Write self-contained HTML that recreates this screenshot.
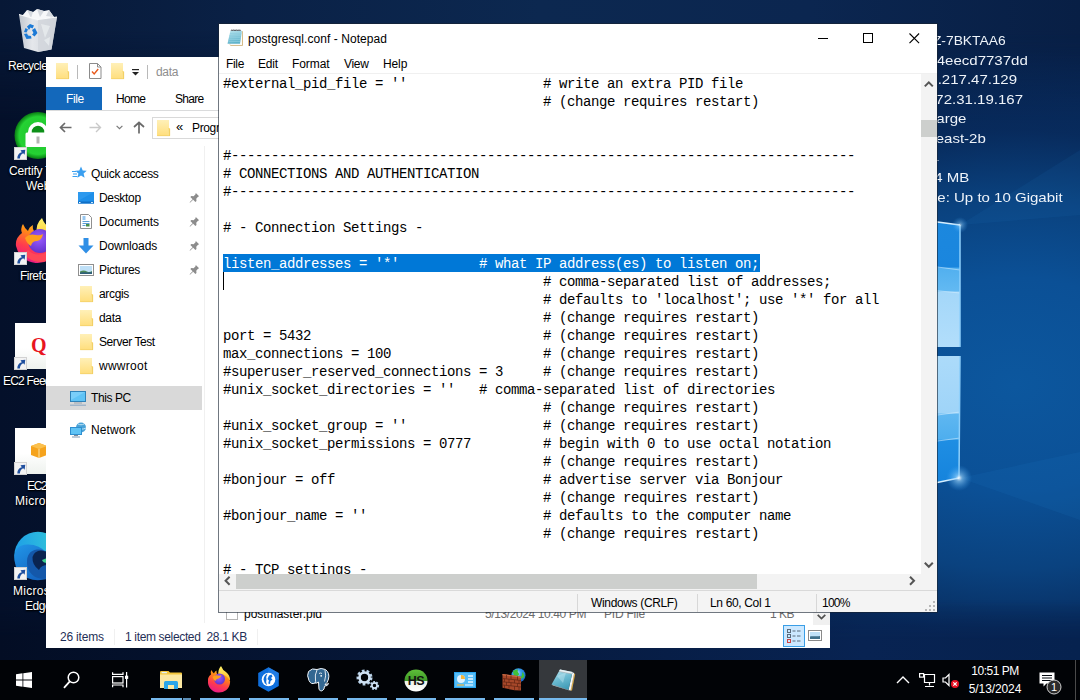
<!DOCTYPE html>
<html><head><meta charset="utf-8"><title>desktop</title>
<style>
*{box-sizing:border-box;margin:0;padding:0}
html,body{width:1080px;height:700px;overflow:hidden}
body{position:relative;font-family:"Liberation Sans",sans-serif;font-size:12px;color:#000;background:#05142e}
.a{position:absolute}
svg{position:absolute;overflow:visible}
#wall{position:absolute;left:0;top:0;width:1080px;height:700px;overflow:hidden;
 background:linear-gradient(90deg,#04102a 0%,#051634 25%,#061d44 55%,#07234f 100%)}
#desk{position:absolute;left:0;top:0;width:1080px;height:660px;overflow:hidden}
.dl{position:absolute;color:#fff;font-size:12px;line-height:14px;white-space:nowrap;text-shadow:0 1px 2px rgba(0,0,0,.95),0 0 2px rgba(0,0,0,.7),1px 1px 1px rgba(0,0,0,.6)}
.bg{position:absolute;left:937px;width:143px;height:20px;overflow:hidden}
.bg span{position:absolute;right:0;top:0;color:#eef3f9;font-size:13.3px;white-space:nowrap;transform-origin:100% 50%;transform:scaleX(1.13)}
/* Explorer */
#exp{position:absolute;left:46px;top:57px;width:784px;height:591px;background:#fff;overflow:hidden}
#exp .t{position:absolute;white-space:nowrap;font-size:12px;color:#000;line-height:14px}
/* Notepad */
#np{position:absolute;left:218px;top:23px;width:720px;height:590px;background:#fff;background-clip:padding-box;border:1px solid rgba(25,35,50,.62);overflow:hidden}
#np .t{position:absolute;white-space:nowrap;font-size:12px;color:#000;line-height:14px}
#txt{position:absolute;left:0;top:50px;width:702px;height:500px;overflow:hidden;background:#fff}
.ln{position:absolute;left:4px;white-space:pre;font-family:"Liberation Mono",monospace;font-size:14px;letter-spacing:-0.4px;height:18px;line-height:18px;color:#000}
.ln.sel{color:#fff}
/* Taskbar */
#tb{position:absolute;left:0;top:660px;width:1080px;height:40px;background:#010306;overflow:hidden}

</style></head>
<body>
<div id="wall"><div class="a" id="topstrip" style="left:0;top:0;width:1080px;height:120px;background:linear-gradient(90deg,#071836 0%,#0a2146 23%,#0c2850 50%,#0b2650 75%,#081f45 100%);-webkit-mask-image:linear-gradient(180deg,#000 25%,transparent 100%);mask-image:linear-gradient(180deg,#000 25%,transparent 100%)"></div>
<div class="a" style="left:0;top:0;width:1080px;height:700px;background:radial-gradient(ellipse 470px 335px at 1015px 385px,#0c579e 0%,#0b5096 32%,#0a427f 55%,rgba(8,47,100,.65) 76%,rgba(7,35,79,0) 100%)"></div>
<svg style="left:930px;top:140px" width="150" height="400" viewBox="930 140 150 400">
<defs><linearGradient id="wg1" x1="0" y1="0" x2="0" y2="1"><stop offset="0" stop-color="#1c88de"/><stop offset=".365" stop-color="#1a86de"/><stop offset=".375" stop-color="#52b0ef"/><stop offset=".555" stop-color="#62b9f2"/><stop offset=".565" stop-color="#a4d7f9"/><stop offset="1" stop-color="#b2defb"/></linearGradient>
<linearGradient id="wg2" x1="0" y1="0" x2="0" y2="1"><stop offset="0" stop-color="#acdbfa"/><stop offset=".445" stop-color="#9fd4f8"/><stop offset=".455" stop-color="#5fb7f1"/><stop offset=".65" stop-color="#4eaeee"/><stop offset=".66" stop-color="#1f8ee3"/><stop offset="1" stop-color="#1583dc"/></linearGradient></defs>
<path d="M930 221L960 225L960 347L930 347z" fill="url(#wg1)"/>
<path d="M930 356L960 356L959 478L930 484z" fill="url(#wg2)"/>
<path d="M930 221L960 225" stroke="#d6efff" stroke-width="1.5"/><path d="M930 266L960 270M930 290L960 293M930 416L960 412M930 442L960 438" stroke="#d6efff" stroke-width="1" opacity=".55"/>
<path d="M960 225V347M960 356L959 478" stroke="#8fd0fb" stroke-width="1.5"/>
<path d="M930 484L959 478" stroke="#d6efff" stroke-width="1.5"/>
<defs><radialGradient id="glw"><stop offset="0" stop-color="#ffffff" stop-opacity=".95"/><stop offset=".25" stop-color="#9fd8ff" stop-opacity=".6"/><stop offset="1" stop-color="#3a9ff0" stop-opacity="0"/></radialGradient></defs><path d="M960 478L1080 452V520z" fill="#2a86d8" opacity=".10"/><path d="M960 225L1080 150V215z" fill="#2a86d8" opacity=".08"/><circle cx="959" cy="478" r="13" fill="url(#glw)"/><circle cx="960" cy="225" r="8" fill="url(#glw)" opacity=".7"/>
</svg>

<div class="a" style="left:0;top:600px;width:1080px;height:60px;background:linear-gradient(90deg,#030d24 0%,#06183a 40%,#082352 80%,#06224f 100%);-webkit-mask-image:linear-gradient(0deg,#000 30%,transparent 100%);mask-image:linear-gradient(0deg,#000 30%,transparent 100%)"></div></div>
<div id="desk"><svg width="0" height="0" style="position:absolute"><defs>
<g id="sc"><rect x="0.5" y="0.5" width="12" height="12" fill="#f3f3f3" stroke="#d2d2d2"/><path d="M3.3 11.500Q3.3 6.5 7.8 5.300L6.5 3.300L11.3 2.800L10.6 7.700L9.3 6.300Q6 7.6 5.9 11.500z" fill="#1f4f9e"/></g>
</defs></svg>
<!-- recycle bin -->
<svg style="left:17px;top:7px" width="42" height="46" viewBox="17 7 42 46">
<defs><linearGradient id="rb" x1="0" y1="0" x2="1" y2="0"><stop offset="0" stop-color="#c9ced5"/><stop offset=".35" stop-color="#eef0f3"/><stop offset=".7" stop-color="#dfe3e8"/><stop offset="1" stop-color="#c3c8cf"/></linearGradient></defs>
<path d="M22 16L27 10L33 12L37 9L44 11L49 10L54 17L38 21z" fill="#f7f8fa"/>
<path d="M27 10L33 12L31 18zM37 9L44 11L40 17zM49 10L54 17L46 16z" fill="#d5d9df"/>
<path d="M19 14.500L38 19.500L57 17L51.5 49.500L38 52L24 48z" fill="url(#rb)" opacity=".96"/>
<path d="M38 19.500L57 17L51.5 49.500L38 52z" fill="#d2d6dc" opacity=".85"/>
<path d="M19 14.500L38 19.500L57 17" fill="none" stroke="#fbfcfd" stroke-width="1"/>
<path d="M41 24l4 14 5-12zM44 40l6-3-1 9z" fill="#e9ecef" opacity=".8"/>
<g fill="#1c7ad6"><path d="M27 26.500l3-2.5 4 1.5-1.5 3-2-1-1.5 2.500z"/><path d="M35 28l2.5 5-3 3.5-2.5-2 1.5-1.5-1.5-3z"/><path d="M31.5 38.500l-5 .5-2.5-5 3-.5 1 2 3 .5z"/><path d="M24 32l1.5-4 2.5 1.5-1.5 3z"/></g>
</svg>
<div class="dl" style="left:8px;top:59px;letter-spacing:-0.460px;">Recycle Bin</div>
<!-- certify -->
<svg style="left:14px;top:112px" width="48" height="48" viewBox="0 0 48 48"><defs><radialGradient id="cg" cx=".5" cy=".5" r=".5"><stop offset="0" stop-color="#1fc02c"/><stop offset=".8" stop-color="#25d233"/><stop offset=".9" stop-color="#16a622"/><stop offset="1" stop-color="#0a7a14"/></radialGradient></defs>
<circle cx="24" cy="23.5" r="23.5" fill="url(#cg)"/>
<path d="M17.7 22v-2a6.3 6.3 0 0 1 12.6 0v2z" fill="#0d8f18"/>
<path d="M15.85 22v-2a8.15 8.15 0 0 1 16.3 0v2" fill="none" stroke="#fff" stroke-width="3.7"/>
<rect x="11.5" y="20.6" width="25" height="14.5" rx="1.5" fill="#fff"/><rect x="22.5" y="24.5" width="3" height="7" fill="#b5b5b5"/></svg>
<svg style="left:14px;top:147px" width="13" height="13"><use href="#sc"/></svg>
<div class="dl" style="left:9px;top:164px;letter-spacing:-0.179px;">Certify The</div>
<div class="dl" style="left:26px;top:179px;letter-spacing:0.014px;">Web</div>
<!-- firefox -->
<svg style="left:14px;top:216px" width="50" height="48" viewBox="14 216 50 48"><defs><linearGradient id="fg" x1=".7" y1="0" x2=".3" y2="1"><stop offset="0" stop-color="#ffbd2f"/><stop offset=".3" stop-color="#ff8a16"/><stop offset=".65" stop-color="#ff3b4e"/><stop offset="1" stop-color="#e8188a"/></linearGradient><radialGradient id="fp" cx=".45" cy=".4" r=".7"><stop offset="0" stop-color="#9a5cff"/><stop offset="1" stop-color="#5a2bc4"/></radialGradient><linearGradient id="fy" x1="0" y1="0" x2="0" y2="1"><stop offset="0" stop-color="#fff36a"/><stop offset="1" stop-color="#ffbd2f"/></linearGradient></defs>
<path d="M37 234Q35 224 42 218Q44 224 50 228Q58 234 58 244L44 244z" fill="url(#fy)"/>
<path d="M22 233Q20 228 23 224Q25 229 28 231Q29 227 33 225Q32 230 36 233Q44 230 52 236Q60 244 58 250A22 21 0 0 1 16 246Q15 238 22 233z" fill="url(#fg)"/>
<circle cx="40" cy="241" r="12" fill="url(#fp)"/>
<path d="M25 238Q29 233 36 235Q40 236 43 234Q42 240 37 241Q32 241 31 246Q27 244 25 238z" fill="#ff9f1c"/>
<path d="M28 250Q36 258 48 252Q56 248 56 240Q60 250 52 258Q40 266 28 258Q22 254 28 250z" fill="#ff4a55" opacity=".9"/></svg>
<svg style="left:14px;top:252px" width="13" height="13"><use href="#sc"/></svg>
<div class="dl" style="left:20px;top:269px;letter-spacing:-0.554px;">Firefox</div>
<!-- EC2 feedback -->
<div class="a" style="left:15px;top:323px;width:46px;height:46px;background:linear-gradient(#fff 55%,#eef2ee)"></div>
<div class="a" style="left:31px;top:333px;font-family:'Liberation Serif',serif;font-weight:bold;font-size:20px;line-height:24px;color:#e8151f">Q</div>
<svg style="left:14px;top:357px" width="13" height="13"><use href="#sc"/></svg>
<div class="dl" style="left:3px;top:374px;letter-spacing:-0.790px;">EC2 Feedback</div>
<!-- EC2 microsoft -->
<div class="a" style="left:15px;top:428px;width:46px;height:46px;background:linear-gradient(#fff 55%,#eef2ee)"></div>
<svg style="left:31px;top:443px" width="16" height="15"><path d="M8 0l8 3v9l-8 3-8-3V3z" fill="#f5a31d"/><path d="M8 0l8 3-8 3-8-3z" fill="#fbc04d"/><path d="M8 6v9" stroke="#fde3a8" stroke-width="1"/></svg>
<svg style="left:14px;top:462px" width="13" height="13"><use href="#sc"/></svg>
<div class="dl" style="left:27px;top:479px;letter-spacing:-1.315px;">EC2</div>
<div class="dl" style="left:15px;top:494px;letter-spacing:0.269px;">Microsoft</div>
<!-- edge -->
<svg style="left:14px;top:531px" width="50" height="50" viewBox="14 531 50 50"><defs><linearGradient id="eg" x1="0" y1=".2" x2="1" y2=".1"><stop offset="0" stop-color="#1e9fe6"/><stop offset=".6" stop-color="#2cb9de"/><stop offset="1" stop-color="#3fd0c0"/></linearGradient><linearGradient id="eg2" x1="0" y1="0" x2=".6" y2="1"><stop offset="0" stop-color="#2196e8"/><stop offset="1" stop-color="#1466c2"/></linearGradient></defs>
<circle cx="38" cy="555.5" r="23.7" fill="url(#eg)"/>
<path d="M14.4 557Q15 545 27 544.500Q39 544 47 553L47 579Q30 583 20 573Q14 566 14.4 557z" fill="url(#eg2)"/>
<path d="M27 563Q26.5 551 37 549.500Q44 549 48 553L48 578.500Q38 580 32 574.500Q27 570 27 563z" fill="#1458aa"/>
<path d="M32.5 557Q34.5 550.5 41 550.500L48 552L48 565Q41 565 39 570Q32 565 32.5 557z" fill="#0a2450"/>
<path d="M42 560Q43 563 47 563L47 558z" fill="#3ccf8e"/></svg>
<svg style="left:14px;top:567px" width="13" height="13"><use href="#sc"/></svg>
<div class="dl" style="left:13px;top:584px;letter-spacing:0.269px;">Microsoft</div>
<div class="dl" style="left:25px;top:599px;letter-spacing:-0.432px;">Edge</div>
<!-- bginfo -->
<div class="bg" style="top:33px"><span style="right:74px;transform:scaleX(1.04)">EC2AMAZ-7BKTAA6</span></div>
<div class="bg" style="top:53px"><span style="right:52px">i-0a4eecd7737dd</span></div>
<div class="bg" style="top:72px"><span style="right:63px">18.217.47.129</span></div>
<div class="bg" style="top:92px"><span style="right:57px">172.31.19.167</span></div>
<div class="bg" style="top:111px"><span style="right:114px">t3.large</span></div>
<div class="bg" style="top:131px"><span style="right:94px">us-east-2b</span></div>
<div class="bg" style="top:151px"><span style="right:141px">64</span></div>
<div class="bg" style="top:170px"><span style="right:111px">8104 MB</span></div>
<div class="bg" style="top:190px"><span style="right:17px">Performance: Up to 10 Gigabit</span></div>
</div>
<div id="exp"><svg width="0" height="0" style="position:absolute"><defs>
<linearGradient id="fgd" x1="0" y1="0" x2="0" y2="1"><stop offset="0" stop-color="#fff0b8"/><stop offset="1" stop-color="#ffde7c"/></linearGradient><g id="fold"><path d="M0 0h12v8.500h1v7.500h-13z" fill="url(#fgd)"/><path d="M11 8.500h2v7.500h-2z" fill="#f8d468"/><path d="M11.3 9v7" stroke="#fde9a0" stroke-width=".8"/><path d="M12.7 8.700V15.700H0.3" fill="none" stroke="#efcb63" stroke-width=".6"/></g>
<g id="pin"><path d="M6.2 0.8l3 3-1 .6-1.6 1.7.2 2-1 .9-2-2L.9 9.8.6 9.4 3.3 6.6 1.2 4.500l1-.9 2 .2 1.6-1.600z" fill="#8c8c8c"/></g>
</defs></svg>
<!-- title bar -->
<svg style="left:10px;top:6px" width="13" height="16"><use href="#fold"/></svg>
<div class="a" style="left:31px;top:8px;width:1px;height:14px;background:#b9b9b9"></div>
<svg style="left:43px;top:6px" width="13" height="16"><path d="M0.5.5h8l3.5 3.500v11.500h-11.500z" fill="#fff" stroke="#8b8b8b"/><path d="M8.5.5v3.500h3.5" fill="none" stroke="#8b8b8b"/><path d="M3 8.500l2.2 2.5 4-5" fill="none" stroke="#e8591c" stroke-width="1.4"/></svg>
<svg style="left:65px;top:6px" width="13" height="16"><use href="#fold"/></svg>
<svg style="left:86px;top:12px" width="8" height="7"><rect x="0" y="0" width="7" height="1.2" fill="#222"/><path d="M0 3h7l-3.5 3.500z" fill="#222"/></svg>
<div class="a" style="left:101px;top:8px;width:1px;height:14px;background:#b9b9b9"></div>
<div class="t" style="left:110px;top:8px;color:#8e8e8e;letter-spacing:-0.339px;">data</div>
<!-- ribbon tabs -->
<div class="a" style="left:0;top:30px;width:56px;height:23px;background:#1368bb"></div>
<div class="t" style="left:20px;top:35px;color:#fff;letter-spacing:-0.409px;">File</div>
<div class="t" style="left:70px;top:35px;letter-spacing:-0.703px;">Home</div>
<div class="t" style="left:129px;top:35px;letter-spacing:-0.725px;">Share</div>
<div class="a" style="left:0;top:53px;width:784px;height:1px;background:#dadbdc"></div>
<!-- nav row -->
<svg style="left:13px;top:65px" width="13" height="11"><path d="M12.5 5.500h-11M6 1L1.5 5.500L6 10" fill="none" stroke="#6a6a6a" stroke-width="1.7"/></svg>
<svg style="left:43px;top:65px" width="13" height="11"><path d="M0.5 5.500h11M7 1l4.5 4.500L7 10" fill="none" stroke="#c9c9c9" stroke-width="1.4"/></svg>
<svg style="left:70px;top:68px" width="7" height="5"><path d="M0.6.8L3.5 3.7 6.4.8" fill="none" stroke="#7a7a7a" stroke-width="1.2"/></svg>
<svg style="left:87px;top:64px" width="12" height="13"><path d="M6 12.500v-11M1 6L6 1.5 11 6" fill="none" stroke="#6a6a6a" stroke-width="1.7"/></svg>
<div class="a" style="left:106px;top:60px;width:500px;height:22px;border:1px solid #d9d9d9;background:#fff"></div>
<svg style="left:111px;top:63px" width="13" height="16"><use href="#fold"/></svg>
<div class="t" style="left:130px;top:63px;font-size:13px;">«</div>
<div class="t" style="left:146px;top:64px;letter-spacing:-0.361px;">Program Files</div>
<!-- nav pane -->
<div class="a" style="left:158px;top:89px;width:1px;height:477px;background:#f0f0f0"></div>
<svg style="left:26px;top:109px" width="15" height="14"><path d="M9 0.500l1.7 4 4 .3-3.1 2.7 1 4.200L9 9.500l-3.6 2.2 1-4.200L3.3 4.800l4-.3z" fill="#3a9ff0"/><path d="M0 5.500h4M1 8h4M0.5 10.500h5" stroke="#3a9ff0" stroke-width="1.2"/></svg>
<div class="t" style="left:45px;top:110px;letter-spacing:-0.321px;">Quick access</div>
<svg style="left:32px;top:135px" width="16" height="12"><rect x="0" y="0" width="16" height="11.5" fill="#1e8fe9"/><path d="M0 0h16L0 9z" fill="#39a3f3" opacity=".5"/><rect x="0" y="9.5" width="16" height="2" fill="#0f6fc6"/><rect x="1" y="10" width="1.5" height="1" fill="#fff"/><rect x="13" y="10" width="2" height="1" fill="#cfe6fb"/></svg>
<div class="t" style="left:53px;top:134px;letter-spacing:-0.325px;">Desktop</div>
<svg style="left:143px;top:135px" width="11" height="11" viewBox="0 0 10 10"><use href="#pin"/></svg>
<svg style="left:34px;top:157px" width="12" height="15"><path d="M0.5.5h8l3 3v11h-11z" fill="#fff" stroke="#909090"/><path d="M2.5 3h3M2.5 5h3" stroke="#2d8de0" stroke-width="1"/><path d="M2.5 7.500h7M2.5 9.500h7M2.5 11.500h3" stroke="#5c9fd6" stroke-width="1"/><rect x="6" y="10" width="3.5" height="2.5" fill="#4a8f4a"/></svg>
<div class="t" style="left:53px;top:158px;letter-spacing:-0.077px;">Documents</div>
<svg style="left:143px;top:159px" width="11" height="11" viewBox="0 0 10 10"><use href="#pin"/></svg>
<svg style="left:32px;top:181px" width="16" height="16"><path d="M5.5 0h5v7.500h5L8 15.5 0.5 7.500h5z" fill="#2f8fe6"/></svg>
<div class="t" style="left:53px;top:182px;letter-spacing:-0.152px;">Downloads</div>
<svg style="left:143px;top:183px" width="11" height="11" viewBox="0 0 10 10"><use href="#pin"/></svg>
<svg style="left:32px;top:207px" width="16" height="12"><rect x="0.5" y="0.5" width="15" height="11" fill="#fff" stroke="#8f8f8f"/><rect x="2" y="2" width="12" height="8" fill="#bfe0f7"/><path d="M2 10V7.500c3-1.5 5-1 7 0s3.5.5 5-.5V10z" fill="#4d8a57"/><path d="M2 10V8.700c4-.8 8 .2 12-.7V10z" fill="#2f5f7a"/></svg>
<div class="t" style="left:53px;top:206px;letter-spacing:-0.294px;">Pictures</div>
<svg style="left:143px;top:207px" width="11" height="11" viewBox="0 0 10 10"><use href="#pin"/></svg>
<svg style="left:34px;top:229px" width="13" height="16"><use href="#fold"/></svg>
<div class="t" style="left:53px;top:230px;letter-spacing:-0.335px;">arcgis</div>
<svg style="left:34px;top:253px" width="13" height="16"><use href="#fold"/></svg>
<div class="t" style="left:53px;top:254px;letter-spacing:-0.339px;">data</div>
<svg style="left:34px;top:277px" width="13" height="16"><use href="#fold"/></svg>
<div class="t" style="left:53px;top:278px;letter-spacing:-0.429px;">Server Test</div>
<svg style="left:34px;top:301px" width="13" height="16"><use href="#fold"/></svg>
<div class="t" style="left:53px;top:302px;letter-spacing:0.260px;">wwwroot</div>
<div class="a" style="left:0;top:329px;width:156px;height:24px;background:#d9d9d9"></div>
<svg style="left:24px;top:334px" width="16" height="15"><rect x="0.5" y="0.5" width="15" height="10" fill="#5fc3f5" stroke="#2f82b8"/><path d="M1 1h14L1 9z" fill="#8bd6fb" opacity=".6"/><rect x="4" y="11.6" width="8" height=".8" fill="#8d9aa5"/><rect x="0" y="13.7" width="16" height=".9" fill="#7f9fc0"/></svg>
<div class="t" style="left:45px;top:334px;letter-spacing:-0.418px;">This PC</div>
<svg style="left:24px;top:365px" width="17" height="16"><circle cx="11" cy="5.5" r="5" fill="#4aa3d8"/><path d="M8 2c2 1 4 1 6 0M7 6c3 1.5 6 1.5 9 0" stroke="#bfe3f5" stroke-width="1" fill="none"/><rect x="0.5" y="5.5" width="11" height="7" fill="#5fc3f5" stroke="#2f8fd0"/><rect x="4" y="13" width="4" height="1" fill="#7f8c97"/><rect x="2" y="14.5" width="8" height="1" fill="#7f98b4"/></svg>
<div class="t" style="left:45px;top:366px;letter-spacing:0.084px;">Network</div>
<!-- file row under notepad -->
<div class="a" style="left:180px;top:551px;width:12px;height:12px;border:1px solid #b5b5b5;background:#fff"></div>
<div class="t" style="left:198px;top:550px;letter-spacing:-0.003px;">postmaster.pid</div>
<div class="t" style="left:439px;top:550px;color:#6d6d6d;letter-spacing:-0.394px;">5/13/2024 10:40 PM</div>
<div class="t" style="left:558px;top:550px;color:#6d6d6d;letter-spacing:-0.209px;">PID File</div>
<div class="t" style="left:724px;top:550px;color:#6d6d6d;letter-spacing:-0.504px;">1 KB</div>
<!-- right scrollbar -->
<div class="a" style="left:767px;top:106px;width:17px;height:462px;background:#f0f0f0"></div>
<svg style="left:771px;top:557px" width="9" height="6"><path d="M0.7.8L4.5 4.6 8.3.8" stroke="#505050" stroke-width="1.7" fill="none"/></svg>
<!-- status bar -->
<div class="t" style="left:14px;top:573px;color:#1f2f57;letter-spacing:-0.194px;">26 items</div>
<div class="a" style="left:68px;top:572px;width:1px;height:16px;background:#f0f0f0"></div>
<div class="t" style="left:79px;top:573px;color:#1f2f57;letter-spacing:-0.345px;">1 item selected&nbsp;&nbsp;28.1 KB</div>
<div class="a" style="left:211px;top:572px;width:1px;height:16px;background:#f0f0f0"></div>
<div class="a" style="left:737px;top:568px;width:22px;height:22px;background:#cce8ff;border:1px solid #3a9ee6"></div>
<svg style="left:741px;top:572px" width="14" height="14"><g fill="none" stroke="#5a6a7a"><rect x="0.5" y="0.5" width="3" height="3"/><rect x="0.5" y="5.5" width="3" height="3"/><rect x="0.5" y="10.5" width="3" height="3" stroke="#d04040"/></g><path d="M5.5 2h3M10 2h3.500M5.5 7h3M10 7h3.500M5.5 12h3M10 12h3.5" stroke="#5a6a7a"/></svg>
<svg style="left:762px;top:573px" width="14" height="11"><rect x="0.5" y="0.5" width="13" height="10" fill="#fff" stroke="#8a8a8a"/><rect x="2" y="2" width="10" height="7" fill="#bfe0f7"/><path d="M2 9V6.500c3-1 6 .5 10-.5V9z" fill="#3f6f8a"/></svg>
</div>
<div id="np"><!-- title bar -->
<svg style="left:7px;top:5px" width="20" height="20" viewBox="226 29 20 20"><defs><linearGradient id="npg" x1="0" y1="0" x2=".3" y2="1"><stop offset="0" stop-color="#b9e4ee"/><stop offset="1" stop-color="#5fb3cb"/></linearGradient></defs>
<path d="M242 31L243 31.500L242.8 45.700L230.5 45.700L229.5 44z" fill="#c9aa6c"/>
<path d="M241.5 31L242.3 31.300L242 45L230.5 45L229.8 44z" fill="#fbfbf8"/>
<path d="M230.4 30.800L242 30.800L240 43.800L227.5 43.800z" fill="url(#npg)"/>
<path d="M230 33.500h11.300M229.6 35.500h11.400M229.2 37.500h11.500M228.8 39.500h11.600M228.4 41.500h11.7" stroke="#8fcfe0" stroke-width=".7"/>
<path d="M231 31l.8-1.3.8 1.3.8-1.3.8 1.3.8-1.3.8 1.3.8-1.3.8 1.3.8-1.3.8 1.3.8-1.3.8 1.3" fill="none" stroke="#4a4f55" stroke-width=".8"/>
</svg>
<div class="t" style="left:29px;top:8px;letter-spacing:0.063px;">postgresql.conf - Notepad</div>
<svg style="left:599px;top:14px" width="11" height="1"><rect width="10" height="1" fill="#000"/></svg>
<svg style="left:644px;top:9px" width="11" height="11"><rect x="0.5" y="0.5" width="9" height="9" fill="none" stroke="#000"/></svg>
<svg style="left:690px;top:9px" width="11" height="11"><path d="M0.5 0.5l9.6 9.6M10.1 0.5l-9.6 9.6" stroke="#000" stroke-width="1.1" fill="none"/></svg>
<!-- menu -->
<div class="t" style="left:7px;top:33px;letter-spacing:-0.334px;">File</div>
<div class="t" style="left:39px;top:33px;letter-spacing:-0.232px;">Edit</div>
<div class="t" style="left:73px;top:33px;letter-spacing:-0.084px;">Format</div>
<div class="t" style="left:125px;top:33px;letter-spacing:-0.324px;">View</div>
<div class="t" style="left:164px;top:33px;letter-spacing:-0.108px;">Help</div>
<div class="a" style="left:0;top:49px;width:718px;height:1px;background:#f0f0f0"></div>
<div id="txt">
<div class="ln" style="top:1px">#external_pid_file = ''                 # write an extra PID file</div>
<div class="ln" style="top:19px">                                        # (change requires restart)</div>
<div class="ln" style="top:73px">#------------------------------------------------------------------------------</div>
<div class="ln" style="top:91px"># CONNECTIONS AND AUTHENTICATION</div>
<div class="ln" style="top:109px">#------------------------------------------------------------------------------</div>
<div class="ln" style="top:145px"># - Connection Settings -</div>
<div class="a" style="left:4px;top:180px;width:537px;height:18px;background:#0078d7"></div>
<div class="ln sel" style="top:181px">listen_addresses = '*'          # what IP address(es) to listen on;</div>
<div class="ln" style="top:199px">                                        # comma-separated list of addresses;</div>
<div class="ln" style="top:217px">                                        # defaults to 'localhost'; use '*' for all</div>
<div class="ln" style="top:235px">                                        # (change requires restart)</div>
<div class="ln" style="top:253px">port = 5432                             # (change requires restart)</div>
<div class="ln" style="top:271px">max_connections = 100                   # (change requires restart)</div>
<div class="ln" style="top:289px">#superuser_reserved_connections = 3     # (change requires restart)</div>
<div class="ln" style="top:307px">#unix_socket_directories = ''   # comma-separated list of directories</div>
<div class="ln" style="top:325px">                                        # (change requires restart)</div>
<div class="ln" style="top:343px">#unix_socket_group = ''                 # (change requires restart)</div>
<div class="ln" style="top:361px">#unix_socket_permissions = 0777         # begin with 0 to use octal notation</div>
<div class="ln" style="top:379px">                                        # (change requires restart)</div>
<div class="ln" style="top:397px">#bonjour = off                          # advertise server via Bonjour</div>
<div class="ln" style="top:415px">                                        # (change requires restart)</div>
<div class="ln" style="top:433px">#bonjour_name = ''                      # defaults to the computer name</div>
<div class="ln" style="top:451px">                                        # (change requires restart)</div>
<div class="ln" style="top:487px"># - TCP settings -</div>
<div class="a" style="left:4px;top:198px;width:1px;height:18px;background:#000"></div>
</div>
<!-- vscroll -->
<div class="a" style="left:702px;top:50px;width:16px;height:500px;background:#f3f3f3"></div>
<div class="a" style="left:702px;top:96px;width:16px;height:17px;background:#cdcfcd"></div>
<svg style="left:705px;top:57px" width="10" height="7"><path d="M0.8 5.4L4.8 1.4L8.8 5.4" stroke="#555" stroke-width="2" fill="none"/></svg>
<svg style="left:705px;top:538px" width="10" height="7"><path d="M0.8 0.8L4.8 4.8L8.8 0.8" stroke="#555" stroke-width="2" fill="none"/></svg>
<!-- hscroll -->
<div class="a" style="left:0;top:550px;width:718px;height:16px;background:#f3f3f3"></div>
<div class="a" style="left:17px;top:550px;width:521px;height:15px;background:#cdcfcd"></div>
<svg style="left:5px;top:552px" width="7" height="10"><path d="M5.6 0.8L1.6 4.8L5.6 8.8" stroke="#555" stroke-width="2" fill="none"/></svg>
<svg style="left:690px;top:552px" width="7" height="10"><path d="M1 0.8L5 4.8L1 8.8" stroke="#555" stroke-width="2" fill="none"/></svg>
<!-- status -->
<div class="a" style="left:0;top:566px;width:718px;height:22px;background:#f4f4f4;border-top:1px solid #d9d9d9"></div>
<div class="a" style="left:358px;top:570px;width:1px;height:18px;background:#d7d7d7"></div>
<div class="a" style="left:478px;top:570px;width:1px;height:18px;background:#d7d7d7"></div>
<div class="a" style="left:597px;top:570px;width:1px;height:18px;background:#d7d7d7"></div>
<div class="t" style="left:372px;top:572px;letter-spacing:-0.346px;">Windows (CRLF)</div>
<div class="t" style="left:491px;top:572px;letter-spacing:-0.351px;">Ln 60, Col 1</div>
<div class="t" style="left:603px;top:572px;letter-spacing:-0.798px;">100%</div>
<!-- grip --><svg style="left:705px;top:576px" width="12" height="12"><g fill="#b8b8b8"><rect x="9" y="1" width="2" height="2"/><rect x="5" y="5" width="2" height="2"/><rect x="9" y="5" width="2" height="2"/><rect x="1" y="9" width="2" height="2"/><rect x="5" y="9" width="2" height="2"/><rect x="9" y="9" width="2" height="2"/></g></svg>
</div>
<div id="tb"><!-- start -->
<svg style="left:16px;top:12px" width="16" height="16" viewBox="0 0 16 16"><path d="M0 2.200L6.5 1.300V7.600H0zM7.3 1.200L16 0V7.600H7.300zM0 8.400H6.500V14.700L0 13.800zM7.3 8.400H16V16L7.3 14.800z" fill="#fff"/></svg>
<!-- search -->
<svg style="left:63px;top:11px" width="19" height="18"><circle cx="10.5" cy="6.5" r="5.3" fill="none" stroke="#fff" stroke-width="1.5"/><path d="M6.8 10.400L1 16.8" stroke="#fff" stroke-width="1.8"/></svg>
<!-- task view -->
<svg style="left:111px;top:11px" width="18" height="18"><g fill="none" stroke="#fff" stroke-width="1.2"><path d="M1.6 1.200V3.400H12V1.2"/><rect x="1.6" y="5.6" width="10.4" height="6.4"/><path d="M1.6 16.200V14H12V16.2"/><path d="M15.6 1V16.4"/></g><rect x="14" y="4.7" width="3.2" height="3.2" fill="#fff"/></svg>
<!-- indicators -->
<div class="a" style="left:151px;top:38px;width:31px;height:2px;background:#76b9ed"></div>
<div class="a" style="left:183px;top:38px;width:8px;height:2px;background:#5d8fb8"></div>
<div class="a" style="left:200px;top:38px;width:40px;height:2px;background:#76b9ed"></div>
<div class="a" style="left:249px;top:38px;width:40px;height:2px;background:#76b9ed"></div>
<div class="a" style="left:298px;top:38px;width:40px;height:2px;background:#76b9ed"></div>
<div class="a" style="left:347px;top:38px;width:40px;height:2px;background:#76b9ed"></div>
<div class="a" style="left:396px;top:38px;width:40px;height:2px;background:#76b9ed"></div>
<div class="a" style="left:445px;top:38px;width:40px;height:2px;background:#76b9ed"></div>
<div class="a" style="left:494px;top:38px;width:40px;height:2px;background:#76b9ed"></div>
<div class="a" style="left:539px;top:0;width:48px;height:40px;background:#35383c"></div>
<div class="a" style="left:539px;top:38px;width:48px;height:2px;background:#76b9ed"></div>
<!-- explorer icon -->
<svg style="left:160px;top:11px" width="22" height="18" viewBox="0 0 22 18"><path d="M0 1.200Q0 0 1.2 0h7.300l1.5 1.500h11Q22 1.5 22 2.500V17H0z" fill="#f2c53d"/><rect x="1.5" y="1" width="5.5" height="1.3" rx=".5" fill="#dff3fb"/><path d="M0 3.500h22V17H0z" fill="#fbe8a2"/><path d="M4 11.500Q4 10 5.5 10h11Q18 10 18 11.500V18H4z" fill="#2ba6e9"/><path d="M8 14h6v4H8z" fill="#fbe8a2"/></svg>
<!-- firefox -->
<svg style="left:207px;top:6px" width="25" height="24" viewBox="14 216 50 48"><path d="M37 234Q35 224 42 216Q45 224 52 228Q60 234 60 244L44 244z" fill="url(#fy)"/><path d="M22 233Q20 228 23 224Q25 229 28 231Q29 227 33 225Q32 230 36 233Q44 230 52 236Q62 244 60 250A22 21 0 0 1 16 246Q15 238 22 233z" fill="url(#fg)"/><circle cx="39" cy="242" r="11" fill="url(#fp)"/><path d="M25 238Q29 233 36 235Q40 236 43 234Q42 240 37 241Q32 241 31 246Q27 244 25 238z" fill="#ff9f1c"/></svg>
<!-- hex blue -->
<svg style="left:258px;top:7px" width="21" height="25" viewBox="0 0 21 25"><path d="M10.5 0.300L20.8 6v13L10.5 24.7 0.2 19V6z" fill="#0f6fdc"/><path d="M10.5 0.300L20.8 6v6.500L10.5 12.500z" fill="#2b86ea" opacity=".6"/><circle cx="10.5" cy="12.5" r="6.8" fill="#fff"/><path d="M9.5 6.500Q6 8 5.5 12.500Q6 16.5 9 18.300Q7.5 15 8.5 12.500Q7.8 9.5 9.5 6.500zM11 8.500l2.5-1 1 2-1.5 1.5 1.5 1.5-2 1.5-.5 3-1.8-.5.8-3-1.5-1.500z" fill="#0f6fdc"/></svg>
<!-- pgadmin elephant -->
<svg style="left:306px;top:8px" width="24" height="24" viewBox="0 0 24 24"><path d="M2.5 3.500Q6 -0.5 11 1.500Q15 -0.5 19.5 1.500Q24 5 22.5 11Q21.5 15 19 16.500Q21 16.5 22.5 15.500Q22 18 18.5 18.200L18 21Q15.5 24.5 13 21.500L12.5 14Q11 15.5 9 15Q5 17 3 12.500Q0.5 7.5 2.5 3.500z" fill="#336791" stroke="#f2f5f8" stroke-width="1"/><path d="M11 2Q8.5 7 9.5 12Q10 14 9 15M19 2Q20.5 8 18.5 13.5" fill="none" stroke="#f2f5f8" stroke-width=".9"/><path d="M13 5.500Q14.5 4.5 16 5.5" fill="none" stroke="#f2f5f8" stroke-width=".9"/><circle cx="15.2" cy="7.8" r=".9" fill="#fff"/></svg>
<!-- gears -->
<svg style="left:355px;top:8px" width="25" height="23" viewBox="0 0 25 23"><g fill="none"><circle cx="9.5" cy="9.5" r="6" stroke="#b9d3ea" stroke-width="4" stroke-dasharray="2.4 1.8"/><circle cx="9.5" cy="9.5" r="5" stroke="#cfe1f2" stroke-width="2.6"/><circle cx="19.5" cy="17.5" r="3.3" stroke="#b9d3ea" stroke-width="2.6" stroke-dasharray="1.6 1.2"/><circle cx="19.5" cy="17.5" r="2.6" stroke="#cfe1f2" stroke-width="1.6"/></g></svg>
<!-- HS -->
<svg style="left:404px;top:9px" width="24" height="23" viewBox="0 0 24 23"><defs><linearGradient id="hs" x1="0" y1="0" x2="0" y2="1"><stop offset="0" stop-color="#5fbf3a"/><stop offset=".5" stop-color="#3f9a28"/><stop offset=".5" stop-color="#e9efe6"/><stop offset="1" stop-color="#ffffff"/></linearGradient></defs><ellipse cx="12" cy="11.5" rx="11.5" ry="11" fill="url(#hs)"/><text x="12" y="16" text-anchor="middle" font-family="Liberation Sans" font-weight="bold" font-size="12.5" fill="#111" letter-spacing="-.5">HS</text></svg>
<!-- control panel -->
<svg style="left:454px;top:12px" width="22" height="16" viewBox="0 0 22 16"><rect width="22" height="16" fill="#2aa4ee"/><rect x="1" y="1" width="20" height="14" fill="#56bdf7"/><circle cx="7" cy="7" r="4" fill="#dff1fd"/><path d="M7 7V3a4 4 0 0 1 4 4z" fill="#f4b63c"/><path d="M14 4h5M14 7h5M14 10h5" stroke="#e8f6ff" stroke-width="1.3"/><path d="M3 13h7" stroke="#f4b63c" stroke-width="1.2"/><path d="M11 13h8" stroke="#dff1fd" stroke-width="1.2"/></svg>
<!-- firewall -->
<svg style="left:502px;top:7px" width="25" height="25" viewBox="0 0 25 25"><defs><radialGradient id="gl" cx=".4" cy=".35" r=".7"><stop offset="0" stop-color="#bfe6ff"/><stop offset=".4" stop-color="#3aa0ee"/><stop offset="1" stop-color="#1560c0"/></radialGradient></defs><circle cx="16.5" cy="8.3" r="7" fill="url(#gl)"/><path d="M11 4q2.5-2 5-1.5-1 2 .5 3.500t-1 3-3.5-.5-1-4.500zM20 5q2 1.5 2.5 4-1.5 3-3 2.500t.5-3.500z" fill="#3fbf3a"/><path d="M0.5 7l12 1.5 6.5 1.300V23.500l-6.5-.3L0.5 20.800z" fill="#a7482a"/><path d="M0.5 7l12 1.5 6.5 1.300v1.200L12.5 9.8.5 8.200z" fill="#c96a45"/><path d="M0.5 11.500l12 1.2 6.5.8M0.5 14.800l12 1.2 6.5.8M0.5 18l12 1.2 6.5.8M4.5 8v3.500M9 8.500v3.800M15.5 9.500v3.700M2.5 11.700v3.200M7 12.200v3.300M12.5 12.800v3.300M17 13.400v3.300M4.5 15.200v3.200M9 15.700v3.200M15.5 16.500v3.300M2.5 18.300v2.700M7 18.700v3M12.5 19.200v3.700M17 20v3.3" stroke="#5e2412" stroke-width=".7" fill="none"/></svg>
<!-- notepad -->
<svg style="left:549px;top:8px" width="28" height="26" viewBox="549 668 28 26"><defs><linearGradient id="ng" x1=".2" y1="0" x2=".6" y2="1"><stop offset="0" stop-color="#bfe8f2"/><stop offset=".45" stop-color="#6fbdd3"/><stop offset="1" stop-color="#3f9ab6"/></linearGradient></defs><path d="M574 673.200l1.2 1-3.2 16.3-1.7.2z" fill="#d2a64a"/><path d="M572.5 672l1.7 1.2-3.6 17.4-2.1-.6z" fill="#f4f6f7"/><path d="M560 669.500L572.5 672 568.5 690 551.5 684.500z" fill="url(#ng)"/><path d="M560 669.500L572.5 672 572 674 559 671.500z" fill="#e9eff1"/><path d="M559 671.500L572 674" stroke="#9aa6ab" stroke-width=".6"/><path d="M557 676L566 672.5 563 683z" fill="#d6f1f8" opacity=".35"/><path d="M551.5 684.500L568.5 690 570.3 690.7 553 685.500z" fill="#dfe5e7"/></svg>
<!-- tray -->
<svg style="left:896px;top:16px" width="14" height="8"><path d="M1 7l6-6 6 6" fill="none" stroke="#fff" stroke-width="1.4"/></svg>
<svg style="left:919px;top:13px" width="17" height="15"><g fill="none" stroke="#fff" stroke-width="1.2"><path d="M5.5 1.500h10v8h-10z"/><path d="M10.5 9.500v3M6 13.500h9"/><rect x="0.6" y="0.6" width="4" height="3.5"/></g></svg>
<svg style="left:942px;top:12px" width="18" height="17"><path d="M1 6h2.500l3.5-3.500v11L3.5 10H1z" fill="none" stroke="#fff" stroke-width="1.2"/><circle cx="13" cy="12" r="4" fill="#e81123"/><path d="M11.3 10.300l3.4 3.400M14.7 10.300l-3.4 3.4" stroke="#fff" stroke-width="1.2"/></svg>
<div class="a" style="left:960px;top:4px;width:70px;text-align:center;color:#fff;font-size:12px;line-height:14px;letter-spacing:-.5px">10:51 PM</div>
<div class="a" style="left:960px;top:22px;width:70px;text-align:center;color:#fff;font-size:12px;line-height:14px;letter-spacing:-.1px">5/13/2024</div>
<svg style="left:1039px;top:12px" width="24" height="24"><path d="M0.5.5h15v11h-8l-3 3v-3h-4z" fill="#fff"/><path d="M3 3.500h10M3 6h10M3 8.500h10" stroke="#03080f" stroke-width="1"/><circle cx="15" cy="15" r="7" fill="#2b2b2b" stroke="#d0d0d0" stroke-width="1"/><text x="15" y="19" text-anchor="middle" font-family="Liberation Sans" font-size="11" fill="#fff">1</text></svg>
<div class="a" style="left:1075px;top:0;width:1px;height:40px;background:#4a4a4a"></div>
</div>
</body></html>
